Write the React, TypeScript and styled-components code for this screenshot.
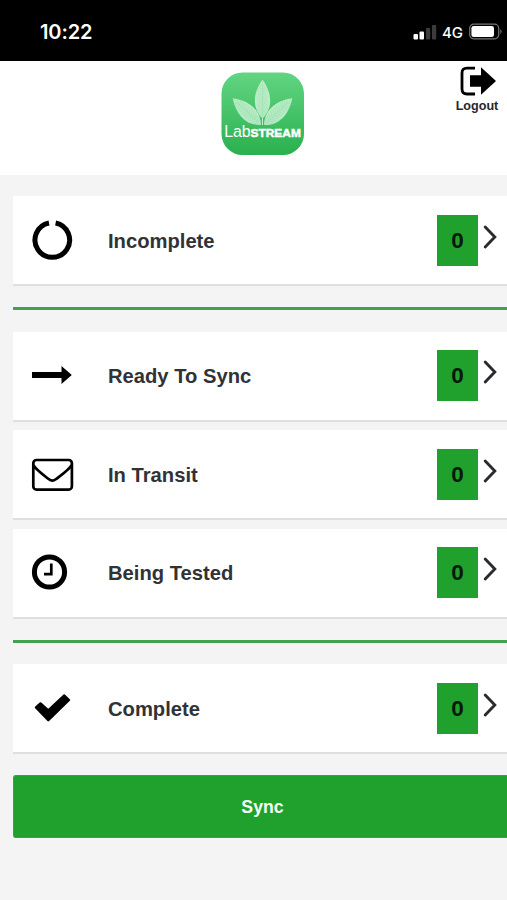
import React from "react";
import styled, { createGlobalStyle } from "styled-components";

const GlobalStyle = createGlobalStyle`
  * { box-sizing: border-box; }
  body {
    margin: 0;
    background: #f4f4f4;
    font-family: "Liberation Sans", Arial, Helvetica, sans-serif;
  }
`;

const Screen = styled.div`
  width: 507px;
  height: 900px;
  overflow: hidden;
  background: #f4f4f4;
`;

const StatusBar = styled.div`
  display: flex;
  align-items: center;
  justify-content: space-between;
  height: 61px;
  padding: 3px 4px 0 40px;
  background: #000;
  color: #fff;
  font-family: Inter, sans-serif;
`;

const Time = styled.span`
  font-size: 20px;
  font-weight: 600;
  line-height: 24px;
  letter-spacing: -0.1px;
`;

const StatusIcons = styled.div`
  display: flex;
  align-items: center;
`;

const Network = styled.span`
  width: 27px;
  margin-left: 4px;
  padding-top: 1px;
  font-size: 15px;
  font-weight: 500;
  line-height: 20px;
`;

const Header = styled.header`
  display: grid;
  grid-template-columns: 1fr 84px 1fr;
  height: 114px;
  padding: 11px 0 0 18px;
  background: #fff;
`;

const Logout = styled.button`
  display: flex;
  flex-direction: column;
  align-items: center;
  justify-self: end;
  align-self: start;
  width: 60px;
  margin-top: -6px;
  padding: 0;
  border: 0;
  background: none;
  color: #26282b;
  font: bold 12.6px/14px "Liberation Sans", Arial, sans-serif;

  svg {
    margin-left: 2px;
  }
`;

const Main = styled.main`
  display: flex;
  flex-direction: column;
  padding: 21px 0 0 13px;
`;

const Group = styled.section`
  display: flex;
  flex-direction: column;
  gap: 8.5px;
`;

const Card = styled.div`
  display: flex;
  align-items: center;
  height: 90px;
  padding-left: 15px;
  background: #fff;
  border-bottom: 2px solid #dfdfe1;
`;

const Label = styled.span`
  flex: 1;
  padding: 1px 0 0 32px;
  color: #303236;
  font-size: 20.2px;
  font-weight: bold;
  line-height: 24px;
`;

const Count = styled.span`
  display: flex;
  align-items: center;
  justify-content: center;
  width: 41px;
  height: 51px;
  padding-top: 1px;
  background: #20a12e;
  color: #08180a;
  font-size: 22.5px;
  font-weight: bold;
`;

const Chevron = styled.svg`
  width: 29px;
  height: 30px;
  margin-bottom: 7px;
`;

const Divider = styled.hr`
  flex: none;
  width: 100%;
  height: 3px;
  margin: 21px 0 21.5px;
  border: 0;
  background: #43a04d;
`;

const SyncButton = styled.button`
  height: 63px;
  margin-top: 21px;
  padding: 1px 0 0 4px;
  border: 1px solid #35a541;
  border-right: 0;
  border-radius: 3px 0 0 3px;
  background: #20a12e;
  color: #f4fff4;
  font: bold 17.7px/22px "Liberation Sans", Arial, sans-serif;
`;

const icons = {
  ring: (
    <path d="M27.6 7 A17.3 17.3 0 1 1 21 7" fill="none" stroke="#000" strokeWidth="5" />
  ),
  arrow: <path d="M4 20H33.5V14L43.8 23L33.5 32V26H4Z" />,
  mail: (
    <g fill="none" stroke="#000" strokeWidth="2.7" strokeLinejoin="round">
      <rect x="5.3" y="10" width="38.6" height="29.6" rx="3.2" />
      <path d="M5.5 15C7 19 15 24.5 21 29.3Q24.4 32 27.8 29.3C34 24.5 42 19 43.6 15" />
    </g>
  ),
  clock: (
    <g fill="none" stroke="#000">
      <circle cx="21.5" cy="23" r="15.1" strokeWidth="5" />
      <path d="M23.3 14.5V25.2H16" strokeWidth="2.7" />
    </g>
  ),
  check: (
    <path
      d="M8 23.5L12.5 19.5L20.3 26.3L36.3 11.5L41 16L20.3 36.2Z"
      stroke="#000"
      strokeWidth="2.4"
      strokeLinejoin="round"
    />
  ),
};

type RowProps = { icon: keyof typeof icons; label: string };

const StatusRow = ({ icon, label }: RowProps) => (
  <Card>
    <svg width="48" height="48" viewBox="0 0 48 48">{icons[icon]}</svg>
    <Label>{label}</Label>
    <Count>0</Count>
    <Chevron viewBox="0 0 29 30">
      <path d="M7.2 5L16.8 15L7.2 25" fill="none" stroke="#292b2f" strokeWidth="2.9" strokeLinecap="round" />
    </Chevron>
  </Card>
);

const veins = Array.from({ length: 12 }, (_, i) => -34 + i * 2.6);

const Leaf = ({ transform }: { transform: string }) => (
  <g transform={transform}>
    <path d="M0 0C-10 -10 -10.5 -24 0 -39C10.5 -24 10 -10 0 0Z" fill="#dcf7e2" fillOpacity=".76" />
    <g stroke="#7bd693" strokeOpacity=".6" strokeWidth=".5" fill="none">
      <path d="M0 -38V0" />
      {veins.map((y) => (
        <path key={y} d={`M-5 ${y - 1}L0 ${y + 2}L5 ${y - 1}`} />
      ))}
    </g>
  </g>
);

const Logo = () => (
  <svg width="84" height="84" viewBox="0 0 84 84">
    <defs>
      <linearGradient id="tile" x1="0" y1="0" x2="0" y2="1">
        <stop offset="0" stopColor="#62d582" />
        <stop offset="1" stopColor="#2ab04e" />
      </linearGradient>
    </defs>
    <rect x="0.5" y="0.5" width="82.5" height="82.5" rx="21" fill="url(#tile)" />
    <Leaf transform="translate(40 53) rotate(-46.5)" />
    <Leaf transform="translate(43 53) rotate(46.5)" />
    <Leaf transform="translate(41.5 46.5)" />
    <path d="M41.5 46V53" stroke="#c4efcf" strokeWidth="1" />
    <text x="3.2" y="65.2" fill="#fff" fontFamily="Liberation Sans" fontSize="16.8" textLength="26.5" lengthAdjust="spacingAndGlyphs">
      Lab
    </text>
    <text x="29.6" y="65.2" fill="#fff" stroke="#fff" strokeWidth=".5" fontFamily="Liberation Sans" fontWeight="bold" fontSize="11.8" textLength="50.2" lengthAdjust="spacingAndGlyphs">
      STREAM
    </text>
  </svg>
);

const App = () => (
  <>
    <GlobalStyle />
    <Screen>
      <StatusBar>
        <Time>10:22</Time>
        <StatusIcons>
          <svg width="25" height="18" viewBox="0 0 25 18" fill="#fff">
            <rect x="0.5" y="11" width="4.5" height="5.5" rx="1" />
            <rect x="6.5" y="8.5" width="4.5" height="8" rx="1" />
            <rect x="13" y="5" width="4.2" height="11.5" rx="1" fill="#3c3c3c" />
            <rect x="19" y="2" width="4.2" height="14.5" rx="1" fill="#3c3c3c" />
          </svg>
          <Network>4G</Network>
          <svg width="34" height="18" viewBox="0 0 34 18">
            <rect x="0.7" y="1.2" width="29" height="14.6" rx="4" fill="none" stroke="#777" strokeWidth="1.2" />
            <rect x="2.4" y="3" width="22.6" height="11" rx="2.3" fill="#fff" />
            <path d="M31.3 6Q34 8.5 31.3 11Z" fill="#777" />
          </svg>
        </StatusIcons>
      </StatusBar>
      <Header>
        <span />
        <Logo />
        <Logout>
          <svg width="38" height="33" viewBox="0 0 38 33">
            <path d="M16 2.1H8Q3 2.1 3 7V23Q3 28 8 28H16" fill="none" stroke="#000" strokeWidth="2.8" />
            <path d="M11 9.3H22V1.3L37 15L22 28.8V20.8H11Z" />
          </svg>
          Logout
        </Logout>
      </Header>
      <Main>
        <Group>
          <StatusRow icon="ring" label="Incomplete" />
        </Group>
        <Divider />
        <Group>
          <StatusRow icon="arrow" label="Ready To Sync" />
          <StatusRow icon="mail" label="In Transit" />
          <StatusRow icon="clock" label="Being Tested" />
        </Group>
        <Divider />
        <Group>
          <StatusRow icon="check" label="Complete" />
        </Group>
        <SyncButton>Sync</SyncButton>
      </Main>
    </Screen>
  </>
);

export default App;
